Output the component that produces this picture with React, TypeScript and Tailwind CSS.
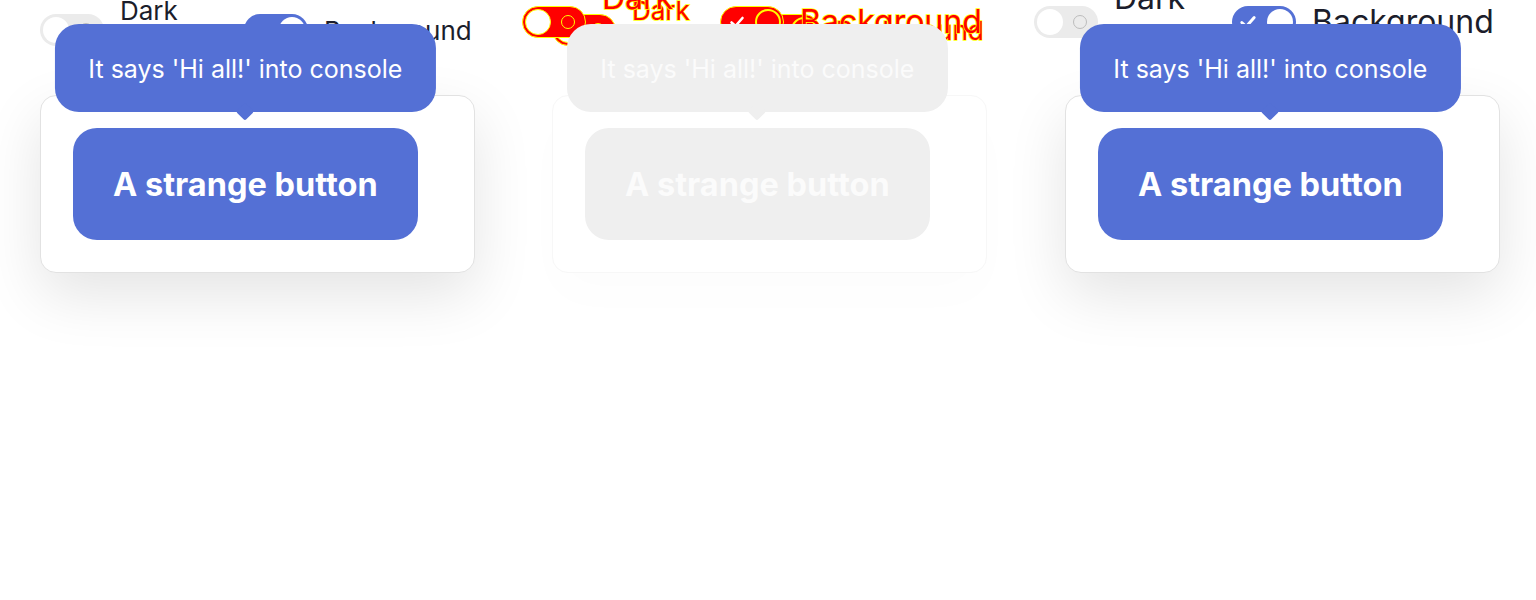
import React from "react";

const BLUE = "bg-[#5470d5]";

function Check({ className }: { className?: string }) {
  return (
    <svg viewBox="0 0 16 16" className={className} fill="none">
      <path d="M2.5 8.5 L6.5 12 L13.5 4" stroke="currentColor" strokeWidth="2.6" strokeLinecap="round" strokeLinejoin="round" />
    </svg>
  );
}

function Switch({ on, diff }: { on: boolean; diff: boolean }) {
  if (diff) {
    return (
      <div className="relative w-16 h-8 shrink-0 rounded-full bg-[#ff0000] border border-[#ffff00]">
        {on ? (
          <>
            <Check className="absolute left-[8px] top-[7px] w-[16px] h-[16px] text-white" />
            <div className="absolute right-[2px] top-[2px] w-[26px] h-[26px] rounded-full border-2 border-[#ffff00] bg-[#ff0000]" />
          </>
        ) : (
          <>
            <div className="absolute left-[2px] top-[2px] w-[26px] h-[26px] rounded-full bg-white border border-[#ffff00]" />
            <div className="absolute right-[10px] top-[8px] w-[14px] h-[14px] rounded-full border-[1.5px] border-[#ffff00]" />
          </>
        )}
      </div>
    );
  }
  if (on) {
    return (
      <div className={`relative w-16 h-8 shrink-0 rounded-full ${BLUE}`}>
        <Check className="absolute left-[7px] top-[7px] w-[18px] h-[18px] text-white" />
        <div className="absolute right-[3px] top-[3px] w-[26px] h-[26px] rounded-full bg-white" />
      </div>
    );
  }
  return (
    <div className="relative w-16 h-8 shrink-0 rounded-full bg-[#ebebeb]">
      <div className="absolute left-[3px] top-[3px] w-[26px] h-[26px] rounded-full bg-white" />
      <div className="absolute right-[11px] top-[9px] w-[14px] h-[14px] rounded-full border-[1.5px] border-[#bcbcbc]" />
    </div>
  );
}

const font = "font-['Inter','Noto_Sans',sans-serif]";
const diffText = "text-[#ff0000] [-webkit-text-stroke:1.5px_#ffff00] [paint-order:stroke_fill]";

function ToggleRow({ big, diff }: { big: boolean; diff: boolean }) {
  const txt = diff ? diffText : "text-[#1b1d2b]";
  const size = big ? "text-[32px] leading-[1.5]" : "text-[26px] leading-[1.5]";
  return (
    <div className={`flex items-center h-8 gap-4 ${big ? "mt-[6px] pl-[10px]" : "mt-[14px] pl-10"} ${txt} ${size}`}>
      <Switch on={false} diff={diff} />
      <div className={big ? "w-[102px]" : "w-[108px]"}>Dark mode</div>
      <Switch on={true} diff={diff} />
      <div className="whitespace-nowrap">Background</div>
    </div>
  );
}

function Card({ diff, left }: { diff: boolean; left: string }) {
  const card = diff
    ? "border-[#f7f7f7] shadow-[0_24px_50px_rgba(0,0,0,0.012)]"
    : "border-[#e2e2e2] shadow-[0_22px_60px_rgba(0,0,0,0.11)]";
  const fill = diff ? "bg-[#efefef] text-[#fbfbfb]" : `${BLUE} text-white`;
  return (
    <div className={`${left} w-[435px] h-[178px] rounded-[16px] border bg-white p-8 ${card}`}>
      <div className="relative inline-block">
        <div className={`absolute bottom-full mb-4 left-1/2 -translate-x-1/2 z-10 h-[88px] px-[33px] pt-[3px] flex items-center whitespace-nowrap rounded-[24px] text-[25px] ${fill}`}>
          It says 'Hi all!' into console
          <div className={`absolute top-full left-1/2 -translate-x-1/2 -mt-[7px] w-[13px] h-[13px] rotate-45 rounded-[2px] ${diff ? "bg-[#efefef]" : BLUE}`} />
        </div>
        <button className={`h-[112px] px-10 pt-[2px] rounded-[24px] text-[32.5px] font-bold ${fill}`}>A strange button</button>
      </div>
    </div>
  );
}

export default function App() {
  return (
    <div className={`flex w-[1536px] h-[600px] bg-white ${font}`}>
      <div className="w-[512px] flex flex-col">
        <div className="h-[95px]">
          <ToggleRow big={false} diff={false} />
        </div>
        <Card diff={false} left="ml-10" />
      </div>
      <div className="w-[512px] flex flex-col">
        <div className="relative h-[95px]">
          <ToggleRow big={false} diff={true} />
          <div className="absolute inset-0">
            <ToggleRow big={true} diff={true} />
          </div>
        </div>
        <Card diff={true} left="ml-10" />
      </div>
      <div className="w-[512px] flex flex-col">
        <div className="h-[95px]">
          <ToggleRow big={true} diff={false} />
        </div>
        <Card diff={false} left="ml-[41px]" />
      </div>
    </div>
  );
}
